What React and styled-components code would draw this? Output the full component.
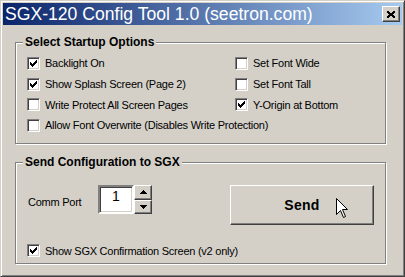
import React from 'react'
import styled, { createGlobalStyle } from 'styled-components'

const GlobalStyle = createGlobalStyle`
  body {
    margin: 0;
    background: #d4d0c8;
    font-family: "Liberation Sans", Arial, sans-serif;
  }
`;

const checkCols = [[0, 2], [1, 3], [2, 4], [3, 3], [4, 2], [5, 1], [6, 0]];

const CheckMark = () => (
  <svg width="7" height="7" viewBox="0 0 7 7" shapeRendering="crispEdges">
    {checkCols.map(([x, y]) => (
      <rect key={x} x={x} y={y} width="1" height="3" fill="#000" />
    ))}
  </svg>
);

const CheckBox = ({ checked, children, span }) => (
  <CheckRow span={span}>
    <Box>{checked && <CheckMark />}</Box>
    <span>{children}</span>
  </CheckRow>
);

const Cursor = () => (
  <svg width="13" height="21" viewBox="0 0 13 21">
    <path d="M0.5 0.5 L0.5 16.5 L4.5 12.5 L7.5 19.5 L9.5 18.5 L6.5 11.5 L11.5 11.5 Z"
      fill="#fff" stroke="#000" strokeWidth="1" />
  </svg>
);

const Triangle = ({ down }) => (
  <svg width="7" height="4" viewBox="0 0 7 4" shapeRendering="crispEdges">
    {down
      ? <path d="M0 0 H7 L3.5 4 Z" fill="#000" />
      : <path d="M3.5 0 L7 4 H0 Z" fill="#000" />}
  </svg>
);

const App = () => {
  return (
    <>
      <GlobalStyle />
      <Window>
        <TitleBar>
          <Title>SGX-120 Config Tool 1.0 (seetron.com)</Title>
          <CloseButton>
            <svg width="8" height="7" viewBox="0 0 8 7" shapeRendering="crispEdges">
              <path d="M0 0 L8 7 M8 0 L0 7" stroke="#000" strokeWidth="2" />
            </svg>
          </CloseButton>
        </TitleBar>
        <Body>
          <Group>
            <Legend>Select Startup Options</Legend>
            <OptionsGrid>
              <CheckBox checked>Backlight On</CheckBox>
              <CheckBox>Set Font Wide</CheckBox>
              <CheckBox checked>Show Splash Screen (Page 2)</CheckBox>
              <CheckBox>Set Font Tall</CheckBox>
              <CheckBox>Write Protect All Screen Pages</CheckBox>
              <CheckBox checked>Y-Origin at Bottom</CheckBox>
              <CheckBox span>Allow Font Overwrite (Disables Write Protection)</CheckBox>
            </OptionsGrid>
          </Group>
          <Group>
            <Legend>Send Configuration to SGX</Legend>
            <SendInner>
              <CommRow>
                <CommLabel>Comm Port</CommLabel>
                <Edit>1</Edit>
                <Spin>
                  <SpinButton><Triangle /></SpinButton>
                  <SpinButton><Triangle down /></SpinButton>
                </Spin>
                <SendButton>
                  Send
                  <CursorWrap><Cursor /></CursorWrap>
                </SendButton>
              </CommRow>
              <ConfirmRow>
                <CheckBox checked>Show SGX Confirmation Screen (v2 only)</CheckBox>
              </ConfirmRow>
            </SendInner>
          </Group>
        </Body>
      </Window>
    </>
  )
}

export default App

const Window = styled.div`
  width: 405px;
  height: 277px;
  box-sizing: border-box;
  background: #d4d0c8;
  border: 1px solid;
  border-color: #d4d0c8 #404040 #404040 #d4d0c8;
  box-shadow: inset 1px 1px #fff, inset -1px -1px #808080;
  padding: 2px;
  display: flex;
  flex-direction: column;
  overflow: hidden;
`;

const TitleBar = styled.div`
  height: 22px;
  flex: none;
  display: flex;
  align-items: center;
  padding: 0 2px 0 2px;
  background: linear-gradient(to right, #0a246a, #a6caf0);
`;

const Title = styled.div`
  flex: 1;
  color: #fff;
  font-size: 17.6px;
  line-height: 22px;
  white-space: nowrap;
`;

const CloseButton = styled.div`
  width: 18px;
  height: 16px;
  box-sizing: border-box;
  display: flex;
  align-items: center;
  justify-content: center;
  background: #d4d0c8;
  border: 1px solid;
  border-color: #fff #404040 #404040 #fff;
  box-shadow: inset -1px -1px #808080;
`;

const Body = styled.div`
  padding: 10px 0 0 12px;
  display: flex;
  flex-direction: column;
  gap: 11px;
`;

const Group = styled.fieldset`
  margin: 0;
  padding: 0;
  width: 371px;
  height: 109px;
  box-sizing: border-box;
  min-inline-size: 0;
  border: 1px solid #808080;
  box-shadow: 1px 1px 0 #fff, inset 1px 1px 0 #fff;
`;

const Legend = styled.legend`
  margin-left: 7px;
  padding: 0 2px;
  background: #d4d0c8;
  font-size: 12px;
  font-weight: 700;
  line-height: 14px;
  color: #000;
`;

const OptionsGrid = styled.div`
  display: grid;
  grid-template-columns: 208px 1fr;
  grid-auto-rows: 20.7px;
  padding: 4px 11px 0 11px;
`;

const CheckRow = styled.label`
  display: flex;
  align-items: center;
  gap: 5px;
  font-size: 11px;
  letter-spacing: -0.25px;
  color: #000;
  white-space: nowrap;
  grid-column: ${p => (p.span ? '1 / span 2' : 'auto')};
`;

const Box = styled.span`
  width: 13px;
  height: 13px;
  box-sizing: border-box;
  flex: none;
  display: flex;
  align-items: center;
  justify-content: center;
  background: #fff;
  border: 1px solid;
  border-color: #808080 #fff #fff #808080;
  box-shadow: inset 1px 1px #404040, inset -1px -1px #d4d0c8;
`;

const SendInner = styled.div`
  padding: 16px 11px 0 11px;
`;

const CommRow = styled.div`
  display: flex;
  align-items: flex-start;
`;

const CommLabel = styled.div`
  width: 71px;
  padding-left: 1px;
  box-sizing: border-box;
  margin-top: 10px;
  font-size: 11px;
  line-height: 14px;
  letter-spacing: -0.25px;
`;

const Edit = styled.div`
  width: 36px;
  height: 29px;
  box-sizing: border-box;
  padding-top: 1px;
  text-align: center;
  font-size: 14px;
  line-height: 16px;
  background: #fff;
  border: 2px solid;
  border-color: #808080 #fff #fff #808080;
  box-shadow: inset 1px 1px #404040, inset -1px -1px #d4d0c8;
`;

const Spin = styled.div`
  display: flex;
  flex-direction: column;
  height: 29px;
`;

const SpinButton = styled.div`
  width: 18px;
  flex: 1;
  box-sizing: border-box;
  display: flex;
  align-items: center;
  justify-content: center;
  background: #d4d0c8;
  border: 1px solid;
  border-color: #fff #404040 #404040 #fff;
  box-shadow: inset -1px -1px #808080;
`;

const SendButton = styled.div`
  position: relative;
  margin-left: auto;
  width: 144px;
  height: 40px;
  box-sizing: border-box;
  display: flex;
  align-items: center;
  justify-content: center;
  background: #d4d0c8;
  border: 1px solid;
  border-color: #fff #404040 #404040 #fff;
  box-shadow: inset -1px -1px #808080;
  font-size: 14px;
  font-weight: 700;
  letter-spacing: 0.3px;
`;

const CursorWrap = styled.div`
  position: absolute;
  left: 105px;
  top: 12px;
  line-height: 0;
`;

const ConfirmRow = styled.div`
  height: 21px;
  margin-top: 15px;
  display: flex;
`;
